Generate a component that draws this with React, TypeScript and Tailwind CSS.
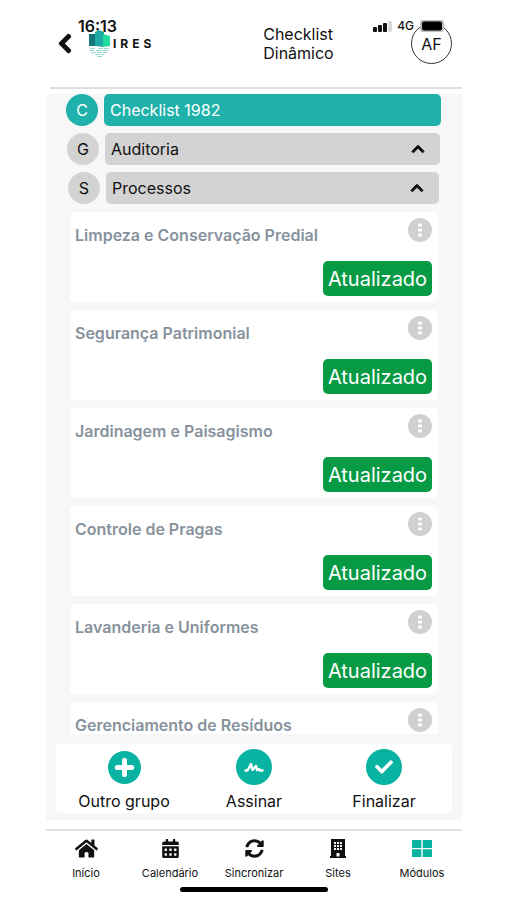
import { FaChevronLeft, FaChevronUp, FaHome, FaCalendarAlt, FaSyncAlt, FaPlus, FaCheck } from "react-icons/fa";
import type { ReactNode } from "react";

const cards = [
  "Limpeza e Conservação Predial",
  "Segurança Patrimonial",
  "Jardinagem e Paisagismo",
  "Controle de Pragas",
  "Lavanderia e Uniformes",
  "Gerenciamento de Resíduos",
];

function StatusBar() {
  return (
    <div className="pointer-events-none absolute inset-x-0 top-[18px] z-10 flex items-center justify-between pr-4 pl-8">
      <span className="text-base leading-4 font-semibold">16:13</span>
      <div className="flex items-center gap-1">
        <svg width="20" height="12" viewBox="0 0 20 12" aria-hidden="true">
          <rect x="0" y="7" width="4" height="5" rx="1" fill="#111" />
          <rect x="5" y="5" width="4" height="7" rx="1" fill="#111" />
          <rect x="10" y="3" width="4" height="9" rx="1" fill="#111" />
          <rect x="15" y="1" width="4" height="11" rx="1" fill="#d9d9d9" />
        </svg>
        <span className="text-xs leading-4 font-medium">4G</span>
        <svg width="28" height="12" viewBox="0 0 28 12" aria-hidden="true">
          <rect x="2" y="0" width="24" height="12" rx="3" fill="#bdbdbd" />
          <rect x="4" y="1.500" width="20" height="9" rx="2" fill="#000" />
          <path d="M26.500 4q2 2 0 4z" fill="#bdbdbd" />
        </svg>
      </div>
    </div>
  );
}

function Logo() {
  return (
    <div className="flex items-center gap-[2px]">
      <svg width="22" height="27" viewBox="0 0 22 27" aria-hidden="true">
        <path d="M0 4h7v12H0z" fill="#13777a" />
        <path d="M6 2l4-2 5 2v15l-9-1z" fill="#20aaa5" />
        <path d="M14 4l7 2v10l-7 1z" fill="#21dda0" />
        <path d="M1 18.500h6m2 0h11M0 20.500h5m2 0h13M2 22.500h16M6 24.500h9M8 26.500h6" stroke="#55bdb4" strokeWidth="1" strokeDasharray="5 1" opacity=".6" />
      </svg>
      <span className="text-xs leading-4 font-bold tracking-[4px]">IRES</span>
    </div>
  );
}

function BuildingIcon() {
  return (
    <svg width="16" height="19" viewBox="0 0 16 19" aria-hidden="true">
      <path d="M1 0h14v17h1v2H0v-2h1z" fill="currentColor" />
      <path d="M4 3h2v2H4zm3 0h2v2H7zm3 0h2v2h-2zM4 6h2v2H4zm3 0h2v2H7zm3 0h2v2h-2zM4 9h2v2H4zm3 0h2v2H7zm3 0h2v2h-2zM6.500 14h3v3.500h-3z" fill="#fff" />
    </svg>
  );
}

function ModulesIcon() {
  return (
    <svg width="20" height="17" viewBox="0 0 20 17" fill="#08b3a2" aria-hidden="true">
      <path d="M0 0h9.300v8H0zM10.700 0H20v8h-9.300zM0 9.300h9.300V17H0zM10.700 9.300H20V17h-9.300z" />
    </svg>
  );
}

function Dots() {
  return (
    <button aria-label="Mais opções" className="flex size-6 items-center justify-center rounded-full bg-[#d0d0d0]">
      <svg width="4" height="14" viewBox="0 0 4 14" fill="#fff" aria-hidden="true">
        <rect y="0.500" width="4" height="3" rx="1" />
        <rect y="5.500" width="4" height="3" rx="1" />
        <rect y="10.500" width="4" height="3" rx="1" />
      </svg>
    </button>
  );
}

function Action({ label, icon, size = "size-9", width }: { label: string; icon: ReactNode; size?: string; width: string }) {
  return (
    <button className={`flex flex-col items-center ${width}`}>
      <span className="flex h-9 items-center">
        <span className={`flex items-center justify-center rounded-full bg-[#08b3a2] text-white ${size}`}>{icon}</span>
      </span>
      <span className="mt-1 text-base leading-6 whitespace-nowrap">{label}</span>
    </button>
  );
}

function GroupRow({ letter, label, inset }: { letter: string; label: string; inset: string }) {
  return (
    <div className={`flex gap-[6px] ${inset}`}>
      <span className="flex size-8 items-center justify-center rounded-full bg-[#d3d3d3] text-base">{letter}</span>
      <button className="flex h-8 flex-1 items-center justify-between rounded-[5px] bg-[#d3d3d3] pr-[15px] pl-[6px] text-base">
        {label}
        <FaChevronUp size={14} stroke="currentColor" strokeWidth={36} />
      </button>
    </div>
  );
}

const tabs = [
  { label: "Início", icon: <FaHome size={23} /> },
  { label: "Calendário", icon: <FaCalendarAlt size={19} /> },
  { label: "Sincronizar", icon: <FaSyncAlt size={19} /> },
  { label: "Sites", icon: <BuildingIcon /> },
  { label: "Módulos", icon: <ModulesIcon /> },
];

export default function App() {
  return (
    <div className="min-h-[900px] bg-white pr-[45px] pl-[46px] font-['Inter','Liberation_Sans',sans-serif] text-[#111]">
      <div className="relative flex min-h-[900px] flex-col">
        <StatusBar />
        <header className="ml-1 flex h-[89px] items-start justify-between border-b-2 border-[#dedede]">
          <div className="flex items-center pt-[30px] pl-[7px]">
            <button aria-label="Voltar" className="mr-4 flex w-4 justify-center">
              <FaChevronLeft size={21} stroke="currentColor" strokeWidth={36} />
            </button>
            <Logo />
          </div>
          <h1 className="ml-10 w-20 pt-[25px] text-base leading-[19px]">Checklist Dinâmico</h1>
          <button className="mt-[23px] mr-[10px] flex size-[41px] items-center justify-center rounded-full border border-[#333] text-base">AF</button>
        </header>

        <main className="mt-[5px] flex flex-1 flex-col bg-[#f7f7f7] pb-[6px]">
          <div className="flex flex-col gap-[7px]">
            <div className="flex gap-[6px] pr-[21px] pl-5 text-white">
              <span className="flex size-8 items-center justify-center rounded-full bg-[#20b2aa] text-base">C</span>
              <h2 className="flex h-8 flex-1 items-center rounded-[5px] bg-[#20b2aa] px-[6px] text-base">Checklist 1982</h2>
            </div>
            <GroupRow letter="G" label="Auditoria" inset="pr-[22px] pl-[21px]" />
            <GroupRow letter="S" label="Processos" inset="pr-[23px] pl-[22px]" />
          </div>

          <div className="mx-6 mt-2 flex h-[522px] flex-col gap-2 overflow-y-auto [scrollbar-width:none]">
            {cards.map((title) => (
              <article key={title} className="flex h-[90px] shrink-0 flex-col rounded-[5px] bg-white pt-[6px] pr-[6px] pl-[5px]">
                <div className="flex h-6 justify-between">
                  <h3 className="pt-[9px] text-base leading-4 font-semibold text-[#87929d]">{title}</h3>
                  <Dots />
                </div>
                <span className="mt-[19px] flex h-[35px] w-[109px] items-center justify-center self-end rounded-[5px] bg-[#079a45] text-xl text-white">Atualizado</span>
              </article>
            ))}
          </div>

          <div className="mx-[10px] mt-[10px] flex h-[69px] justify-between rounded bg-white px-5 pt-[5px]">
            <Action label="Outro grupo" size="size-[33px]" width="w-24" icon={<FaPlus size={21} stroke="currentColor" strokeWidth={24} />} />
            <Action
              label="Assinar"
              width="w-20"
              icon={
                <svg width="20" height="12" viewBox="0 0 20 12" fill="none" stroke="currentColor" strokeWidth="2.400" strokeLinecap="round" strokeLinejoin="round" aria-hidden="true">
                  <path d="M1.500 9.500h2L7 3l1.500 6 3.500-4 1 4 2-1 1 1.500h2.500" />
                </svg>
              }
            />
            <Action label="Finalizar" width="w-24" icon={<FaCheck size={18} />} />
          </div>
        </main>

        <nav className="mt-[9px] h-[71px] border-t-2 border-[#e2e2e2] pt-[7px]">
          <div className="-mx-[2px] flex">
            {tabs.map((t) => (
              <a key={t.label} href="#" className="flex flex-1 flex-col items-center">
                <span className="flex h-5 items-center">{t.icon}</span>
                <span className="mt-[7px] text-[11px] leading-4">{t.label}</span>
              </a>
            ))}
          </div>
        </nav>
        <div className="absolute bottom-2 left-1/2 h-[5px] w-[148px] -translate-x-1/2 rounded-full bg-black" />
      </div>
    </div>
  );
}
